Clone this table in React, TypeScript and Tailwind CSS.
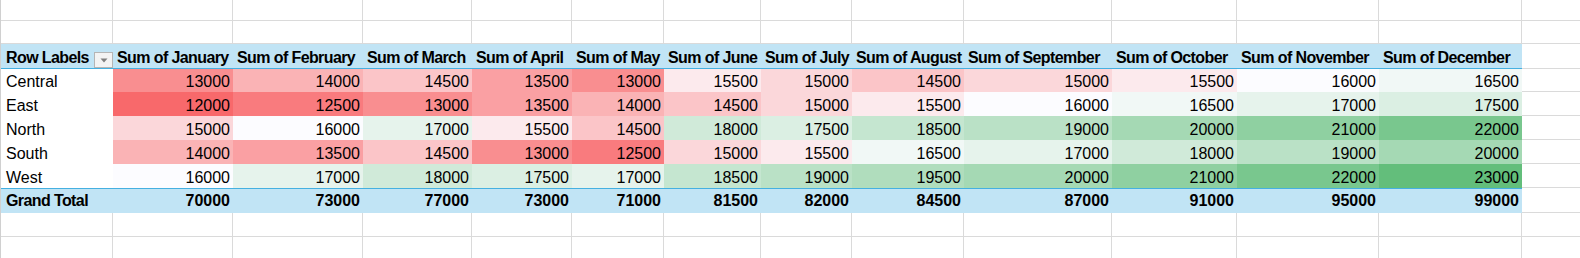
const months = [
  "January", "February", "March", "April", "May", "June",
  "July", "August", "September", "October", "November", "December",
];

const rows: { label: string; values: number[] }[] = [
  { label: "Central", values: [13000, 14000, 14500, 13500, 13000, 15500, 15000, 14500, 15000, 15500, 16000, 16500] },
  { label: "East", values: [12000, 12500, 13000, 13500, 14000, 14500, 15000, 15500, 16000, 16500, 17000, 17500] },
  { label: "North", values: [15000, 16000, 17000, 15500, 14500, 18000, 17500, 18500, 19000, 20000, 21000, 22000] },
  { label: "South", values: [14000, 13500, 14500, 13000, 12500, 15000, 15500, 16500, 17000, 18000, 19000, 20000] },
  { label: "West", values: [16000, 17000, 18000, 17500, 17000, 18500, 19000, 19500, 20000, 21000, 22000, 23000] },
];

const totals = months.map((_, i) => rows.reduce((s, r) => s + r.values[i], 0));

// excel 3-colour scale: red -> white (50th pct) -> green
const RED = [248, 105, 107];
const MID = [252, 252, 255];
const GREEN = [99, 190, 123];
const MIN = 12000;
const P50 = 16000;
const MAX = 23000;

function scaleColor(v: number) {
  let a = RED, b = MID, t = 0;
  if (v <= P50) {
    t = (v - MIN) / (P50 - MIN);
  } else {
    a = MID;
    b = GREEN;
    t = (v - P50) / (MAX - P50);
  }
  const c = a.map((x, i) => Math.round(x + (b[i] - x) * t));
  return `rgb(${c[0]}, ${c[1]}, ${c[2]})`;
}

function BlankRow({ h }: { h: string }) {
  return (
    <>
      {Array.from({ length: 13 }).map((_, i) => (
        <div key={i} className={`${h} border-r border-b border-[#dadada]`}></div>
      ))}
      <div className={`${h} border-b border-[#dadada]`}></div>
    </>
  );
}

function DropButton() {
  return (
    <div className="self-end w-[19px] h-[16px] border border-[#b5b5b5] bg-[#f3f3f3] flex items-center justify-center">
      <svg width="8" height="5" viewBox="0 0 8 5">
        <path d="M0.5 0.5 L7.5 0.5 L4 4.5 Z" fill="#7f7f7f" />
      </svg>
    </div>
  );
}

export default function App() {
  return (
    <div className="w-[1580px] h-[258px] overflow-hidden bg-white text-black text-[16px] font-['Liberation_Sans',Arial,sans-serif]">
      <div className="grid grid-cols-[112px_120px_130px_109px_100px_92px_97px_91px_112px_148px_125px_142px_143px_1fr] grid-rows-[21px_23px_25px_23px_24px_24px_24px_24px_25px_24px_24px] border-l border-[#d0d0d0]">
        {/* empty rows above the pivot */}
        <BlankRow h="h-[21px]" />
        <BlankRow h="h-[23px]" />

        {/* Header */}
        <div className="h-[25px] flex items-start justify-between pl-[5px] bg-[#c1e4f5] border-b border-[#45b0e1]">
          <span className="font-bold tracking-[-0.6px] leading-[28px] h-[24px]">Row Labels</span>
          <DropButton />
        </div>
        {months.map((m) => (
          <div key={m} className="h-[25px] pl-[4px] bg-[#c1e4f5] border-b border-[#45b0e1] font-bold tracking-[-0.6px] leading-[28px] whitespace-nowrap overflow-hidden">
            Sum of {m}
          </div>
        ))}
        <div className="h-[25px] border-b border-[#dadada]"></div>

        {/* Data rows */}
        {rows.map((r, ri) => {
          const h = ri === 0 ? "h-[23px] leading-[26px]" : "h-[24px] leading-[28px]";
          return (
            <div key={r.label} className="contents">
              <div className={`${h} pl-[5px] bg-white`}>{r.label}</div>
              {r.values.map((v, i) => (
                <div key={i} className={`${h} pr-[3px] text-right`} style={{ backgroundColor: scaleColor(v) }}>
                  {v}
                </div>
              ))}
              <div className={`${h} border-b border-[#dadada]`}></div>
            </div>
          );
        })}

        {/* Grand Total */}
        <div className="h-[25px] pl-[5px] bg-[#c1e4f5] border-t border-[#45b0e1] font-bold tracking-[-0.6px] leading-[24px]">
          Grand Total
        </div>
        {totals.map((t, i) => (
          <div key={i} className="h-[25px] pr-[3px] text-right bg-[#c1e4f5] border-t border-[#45b0e1] font-bold leading-[24px]">
            {t}
          </div>
        ))}
        <div className="h-[25px] border-b border-[#dadada]"></div>

        {/* empty rows below */}
        <BlankRow h="h-[24px]" />
        <BlankRow h="h-[24px]" />
      </div>
    </div>
  );
}
